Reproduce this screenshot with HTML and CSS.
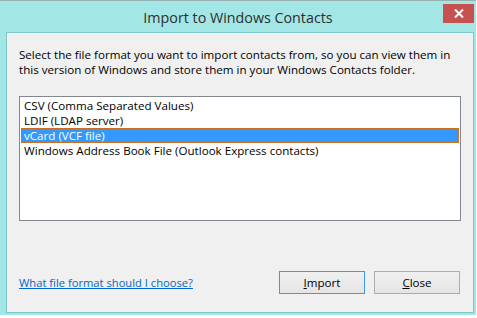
FILE: index.html
```html
<!DOCTYPE html>
<html lang="en">
<head>
    <meta charset="UTF-8">
    <title>Import to Windows Contacts</title>
    <link rel="stylesheet" href="styles.css">
</head>
<body>

<div class="window">
    <!-- title bar -->
    <div class="title-bar">
        <span class="title">Import to Windows Contacts</span>
        <button class="close-x" aria-label="Close">
            <svg width="10" height="9" viewBox="0 0 10 9">
                <path d="M1 0.5 L9 8.5 M9 0.5 L1 8.5" stroke="#fff" stroke-width="2"/>
            </svg>
        </button>
    </div>

    <!-- dialog body -->
    <div class="panel">
        <p class="intro">Select the file format you want to import contacts from, so you can view them in this version of Windows and store them in your Windows Contacts folder.</p>

        <ul class="format-list">
            <li class="format-item">CSV (Comma Separated Values)</li>
            <li class="format-item">LDIF (LDAP server)</li>
            <li class="format-item selected">vCard (VCF file)</li>
            <li class="format-item">Windows Address Book File (Outlook Express contacts)</li>
        </ul>

        <div class="footer">
            <a class="help-link" href="#">What file format should I choose?</a>
            <div class="buttons">
                <button class="btn default"><u>I</u>mport</button>
                <button class="btn"><u>C</u>lose</button>
            </div>
        </div>
    </div>
</div>

</body>
</html>
```

FILE: styles.css
```css
* {
    margin: 0;
    padding: 0;
    box-sizing: border-box;
}

body {
    background: #ffffff;
    font-family: "Open Sans", "Noto Sans", sans-serif;
    font-size: 11.6px;
    color: #000;
}

/* Outer window frame */
.window {
    width: 476px;
    height: 315px;
    background-color: #a3e6e6;
    border-top: 1px solid #9ab0b0;
    display: flex;
    flex-direction: column;
}

/* Title bar */
.title-bar {
    position: relative;
    height: 31px;
    display: flex;
    justify-content: center;
    align-items: center;
}

.title {
    font-size: 14.3px;
    color: #2e2e2e;
    padding-top: 1px;
}

.close-x {
    position: absolute;
    top: 3px;
    right: 2px;
    width: 31px;
    height: 19px;
    border: none;
    background-color: #c75050;
    display: flex;
    justify-content: center;
    align-items: center;
}

/* Main content area */
.panel {
    margin: 0 2px 0 6px;
    height: 281px;
    background-color: #f0f0f0;
    border: 1px solid #7fc6c6;
    padding: 14px 12px 0 12px;
    display: flex;
    flex-direction: column;
}

.intro {
    line-height: 15px;
}

/* List box */
.format-list {
    list-style: none;
    margin-top: 19px;
    height: 125px;
    background: #fff;
    border: 1px solid #828790;
    padding: 1px;
}

.format-item {
    height: 15px;
    line-height: 13px;
    padding-left: 2px;
    border: 1px solid transparent;
}

.format-item.selected {
    background-color: #3399ff;
    color: #fff;
    border: 1px dotted #cc6a1a;
}

/* Bottom row with link and buttons */
.footer {
    margin-top: 50px;
    display: flex;
    justify-content: space-between;
    align-items: center;
}

.help-link {
    color: #0066cc;
    text-decoration: underline;
    font-size: 11.2px;
}

.buttons {
    display: flex;
    gap: 9px;
    padding-right: 1px;
}

.btn {
    width: 86px;
    height: 23px;
    font-family: inherit;
    font-size: 11.6px;
    color: #000;
    background: linear-gradient(#f0f0f0, #e5e5e5);
    border: 1px solid #adadad;
}

.btn.default {
    border-color: #3c9af0;
}
```
